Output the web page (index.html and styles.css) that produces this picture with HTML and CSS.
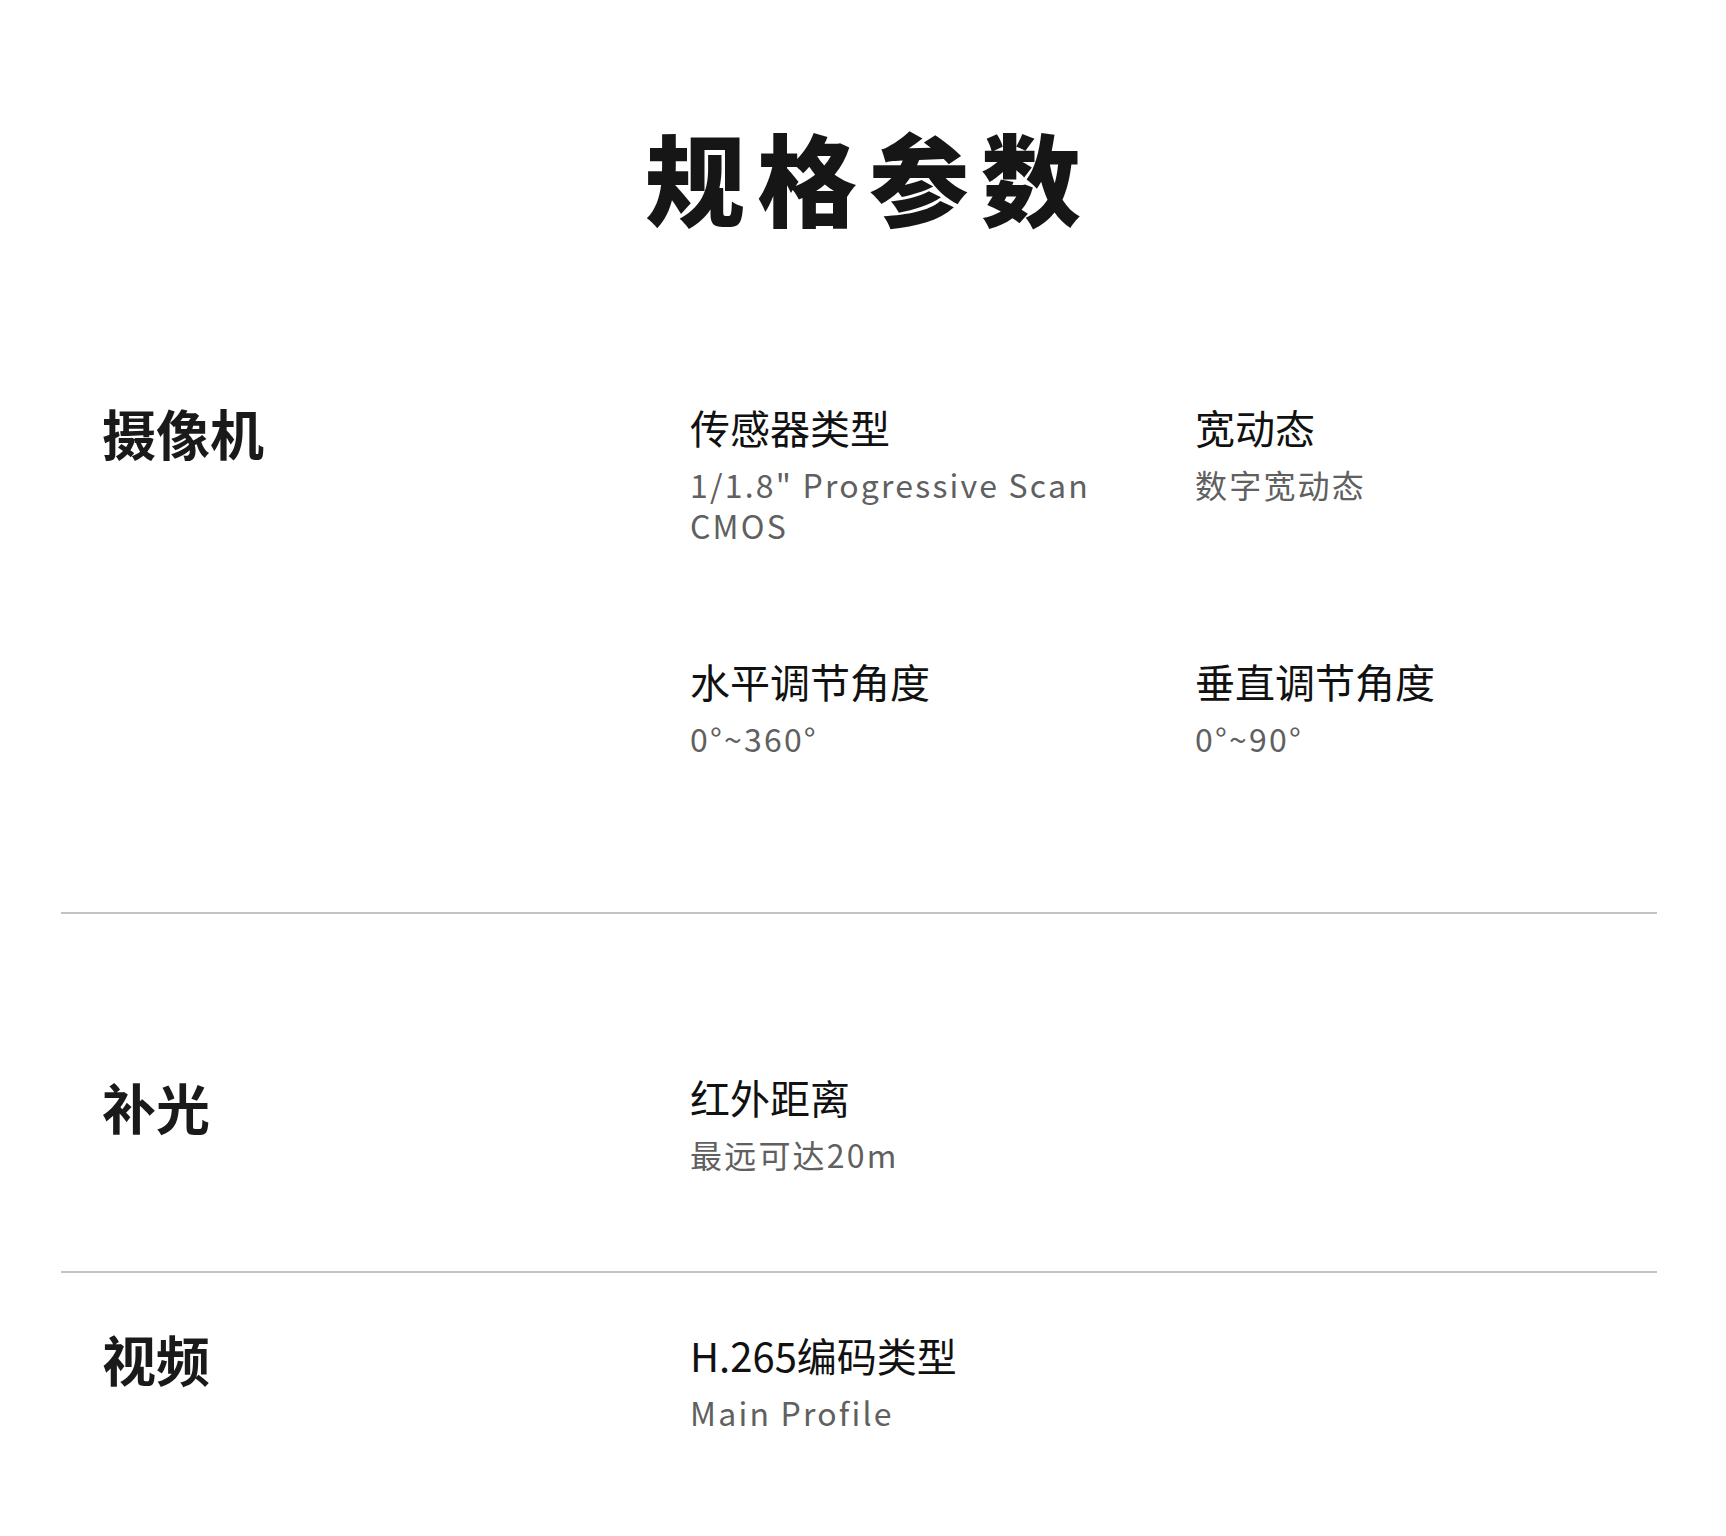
FILE: index.html
```html
<html>
    <head>
        <meta charset="utf-8">
        <link rel="stylesheet" href="styles.css">
    </head>
    <body>
        <h1 class="title">规格参数</h1>
        <div id="specs">
          <div class="spec spec-camera">
            <div class="spec-name">摄像机</div>
            <div class="spec-items">
              <div class="item">
                <div class="item-key">传感器类型</div>
                <div class="item-value">1/1.8" Progressive Scan CMOS</div>
              </div>
              <div class="item">
                <div class="item-key">宽动态</div>
                <div class="item-value">数字宽动态</div>
              </div>
              <div class="item">
                <div class="item-key">水平调节角度</div>
                <div class="item-value">0°~360°</div>
              </div>
              <div class="item">
                <div class="item-key">垂直调节角度</div>
                <div class="item-value">0°~90°</div>
              </div>
            </div>
          </div>
          <div class="spec spec-light">
            <div class="spec-name">补光</div>
            <div class="spec-items">
              <div class="item">
                <div class="item-key">红外距离</div>
                <div class="item-value">最远可达20m</div>
              </div>
            </div>
          </div>
          <div class="spec spec-video">
            <div class="spec-name">视频</div>
            <div class="spec-items">
              <div class="item">
                <div class="item-key">H.265编码类型</div>
                <div class="item-value">Main Profile</div>
              </div>
            </div>
          </div>
        </div>
    </body>
</html>
```

FILE: styles.css
```css
html, body {padding: 0; margin: 0}
body {
    font-family: "Noto Sans CJK SC", "Noto Sans", sans-serif;
    background-color: #fff;
    color: #111;
}
.title {
    margin: 0;
    padding-top: 116px;
    font-size: 100px;
    line-height: 120px;
    font-weight: 900;
    letter-spacing: 12px;
    text-indent: 12px;
    text-align: center;
    color: #161616;
}
#specs {
    margin: 167px 69px 0 61px;
}
.spec {
    display: flex;
    align-items: flex-start;
    padding-left: 41px;
}
.spec + .spec {
    border-top: 2px solid #c4c4c4;
}
.spec-camera {
    padding-bottom: 153px;
}
.spec-camera .spec-name {
    padding-top: 0;
    margin-top: -2px;
}
.spec-light {
    padding-top: 159px;
    padding-bottom: 96px;
}
.spec-video {
    padding-top: 52px;
}
.spec-video .spec-items {
    padding-top: 6px;
}
.spec-name {
    width: 588px;
    flex-shrink: 0;
    font-size: 54px;
    line-height: 64px;
    font-weight: 700;
    color: #1a1a1a;
    padding-top: 2px;
}
.spec-items {
    flex: 1;
    display: grid;
    grid-template-columns: 505px 1fr;
    row-gap: 111px;
}
.item-key {
    font-size: 40px;
    line-height: 48px;
    color: #111;
}
.item-value {
    margin-top: 13px;
    max-width: 430px;
    font-size: 32px;
    line-height: 41px;
    letter-spacing: 2.2px;
    color: #606060;
}
```
